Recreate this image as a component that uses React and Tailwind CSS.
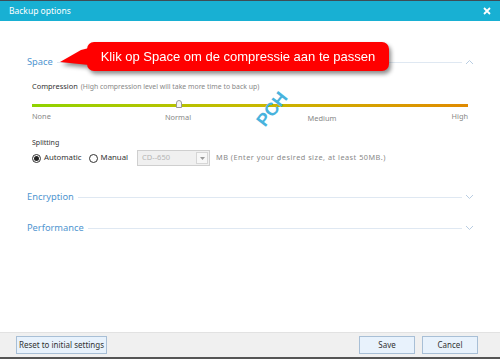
import React from "react";

const SectionHeader = ({ title, open }) => (
  <div className="flex items-center h-[14px] pl-[27px] pr-[26px]">
    <span className="text-[9.3px] text-[#4f95d0] leading-none">{title}</span>
    <div className="flex-1 h-px bg-[#dfe8f2] ml-[4px] mr-[3px]" />
    <svg width="9" height="6" viewBox="0 0 9 6" className="shrink-0">
      {open ? (
        <path d="M1 5 L4.5 1.5 L8 5" fill="none" stroke="#b9cde2" strokeWidth="1" />
      ) : (
        <path d="M1 1 L4.5 4.5 L8 1" fill="none" stroke="#b9cde2" strokeWidth="1" />
      )}
    </svg>
  </div>
);

const Radio = ({ checked, label }) => (
  <label className="flex items-center gap-[3px]">
    <span className="w-[9px] h-[9px] rounded-full border border-[#333] bg-white flex items-center justify-center">
      {checked && <span className="w-[5px] h-[5px] rounded-full bg-[#222]" />}
    </span>
    <span className="text-[7.8px] text-[#333] leading-none">{label}</span>
  </label>
);

const FooterButton = ({ children, className }) => (
  <button
    className={`h-[18px] border border-[#a8bfd6] bg-[#e8f2fc] text-[8px] text-[#333] leading-none ${className}`}
  >
    {children}
  </button>
);

export default function App() {
  return (
    <div className="w-[500px] h-[359px] flex flex-col bg-white overflow-hidden font-['Noto_Sans',sans-serif]">
      <div className="h-px bg-[#3e4c56]" />
      {/* Title bar */}
      <div className="h-[20px] bg-[#18b0d3] flex items-center justify-between pl-[9px] pr-[9px]">
        <span className="text-[8.5px] text-white leading-none">Backup options</span>
        <svg width="8" height="8" viewBox="0 0 8 8">
          <path d="M1 1 L7 7 M7 1 L1 7" stroke="white" strokeWidth="1.8" />
        </svg>
      </div>

      {/* Body */}
      <div className="relative flex-1 flex flex-col">
        <div className="mt-[34px]">
          <SectionHeader title="Space" open />
        </div>

        <div className="pl-[32px] pr-[32px]">
          <div className="mt-[13px] h-[10px] flex items-center gap-[3px] leading-none">
            <span className="text-[7.4px] text-[#333]">Compression</span>
            <span className="text-[6.9px] text-[#888]">(High compression level will take more time to back up)</span>
          </div>

          {/* Slider */}
          <div className="relative mt-[9px] h-[8px] flex items-center">
            <div className="w-full h-[3px] bg-gradient-to-r from-[#8fd300] via-[#c6b900] to-[#e08a00]" />
            <div className="absolute left-[144px] top-[-1px] w-[6px] h-[8px] bg-[#f4f4f4] border border-[#999] rounded-t-[3px]" />
          </div>
          <div className="relative mt-[3px] h-[12px] text-[7.4px] text-[#888] leading-none">
            <span className="absolute left-0 top-[1px]">None</span>
            <span className="absolute left-[146px] top-[2px] -translate-x-1/2">Normal</span>
            <span className="absolute left-[290px] top-[3px] -translate-x-1/2">Medium</span>
            <span className="absolute right-0 top-[1px]">High</span>
          </div>

          <div className="mt-[13px] h-[10px] flex items-center text-[7px] text-[#333] leading-none">Splitting</div>
          <div className="mt-[3px] h-[16px] flex items-center">
            <Radio checked label="Automatic" />
            <div className="w-[7px]" />
            <Radio label="Manual" />
            <div className="ml-[9px] w-[73px] h-[16px] border border-[#cfcfcf] bg-[#f0f0f0] flex items-center justify-between pl-[4px] pr-[1px]">
              <span className="text-[7.5px] text-[#b5b5b5] leading-none">CD--650</span>
              <span className="w-[12px] h-[12px] border border-[#d6d6d6] bg-[#f7f7f7] flex items-center justify-center">
                <svg width="5" height="3" viewBox="0 0 5 3">
                  <path d="M0 0 L5 0 L2.5 3 Z" fill="#9a9a9a" />
                </svg>
              </span>
            </div>
            <span className="ml-[6px] text-[7.3px] tracking-[0.5px] text-[#888] leading-none">MB (Enter your desired size, at least 50MB.)</span>
          </div>
        </div>

        <div className="mt-[24px]">
          <SectionHeader title="Encryption" />
        </div>
        <div className="mt-[17px]">
          <SectionHeader title="Performance" />
        </div>

        {/* Callout annotation */}
        <div className="absolute left-[59px] top-[21px] drop-shadow-[2px_3px_2px_rgba(0,0,0,0.45)]">
          <div className="relative flex items-center">
            <svg width="30" height="24" viewBox="0 0 30 24" className="absolute left-0 top-[6px]">
              <polygon points="22,2 30,0 30,17 1,14" fill="#ff0000" />
            </svg>
            <div className="ml-[28px] w-[302px] h-[29px] rounded-[7px] bg-[#ff0000] flex items-center justify-center">
              <span className="text-[13px] text-white leading-none font-['Liberation_Sans',sans-serif]">
                Klik op Space om de compressie aan te passen
              </span>
            </div>
          </div>
        </div>

        {/* PCH watermark */}
        <span className="absolute left-[253px] top-[79px] rotate-[-52deg] text-[18px] font-bold text-[#48b3dd] leading-none font-['Liberation_Sans',sans-serif]">
          PCH
        </span>
      </div>

      {/* Footer */}
      <div className="h-[25px] bg-[#f0f0f0] border-t border-[#e2e2e2] flex items-center pl-[16px] pr-[22px]">
        <FooterButton className="w-[91px]">Reset to initial settings</FooterButton>
        <div className="flex-1" />
        <FooterButton className="w-[56px]">Save</FooterButton>
        <FooterButton className="w-[56px] ml-[7px]">Cancel</FooterButton>
      </div>
      <div className="h-[2px] bg-[#555]" />
    </div>
  );
}
